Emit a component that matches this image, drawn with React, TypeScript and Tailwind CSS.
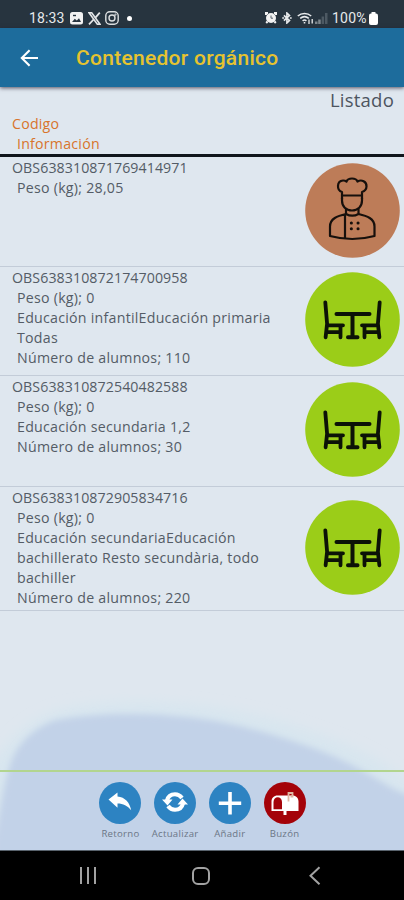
import React from 'react';

type Entry = {
  code: string;
  kind: 'kitchen' | 'dining';
  lines: string[];
  size: string;
};

const entries: Entry[] = [
  { code: 'OBS638310871769414971', kind: 'kitchen', lines: ['Peso (kg); 28,05'], size: 'h-[110px]' },
  {
    code: 'OBS638310872174700958',
    kind: 'dining',
    lines: ['Peso (kg); 0', 'Educación infantilEducación primaria', 'Todas', 'Número de alumnos; 110'],
    size: 'h-[109px]',
  },
  {
    code: 'OBS638310872540482588',
    kind: 'dining',
    lines: ['Peso (kg); 0', 'Educación secundaria 1,2', 'Número de alumnos; 30'],
    size: 'h-[111px]',
  },
  {
    code: 'OBS638310872905834716',
    kind: 'dining',
    lines: [
      'Peso (kg); 0',
      'Educación secundariaEducación',
      'bachillerato Resto secundària, todo',
      'bachiller',
      'Número de alumnos; 220',
    ],
    size: 'h-[124px]',
  },
];

export default function App() {
  return (
    <div className="flex h-[900px] w-[404px] flex-col overflow-hidden bg-[#dfe7ef] font-['Open_Sans',sans-serif]">
      <StatusBar />
      <AppBar />
      <main className="relative isolate flex flex-1 flex-col overflow-hidden">
        <Backdrop />
        <ListHeader />
        {entries.map(e => (
          <EntryRow key={e.code} entry={e} />
        ))}
        <Toolbar />
      </main>
      <NavBar />
    </div>
  );
}

function StatusBar() {
  return (
    <div className="flex h-7 shrink-0 items-center bg-[#27343f] pt-2 pl-[29px] font-[Roboto,sans-serif] text-[14px] text-[#e6e9eb]">
      <span className="w-[36px] tracking-[0.1px]">18:33</span>
      <svg className="ml-[5px]" width="13" height="13" viewBox="0 0 13 13">
        <rect width="13" height="12.5" rx="2.5" fill="#f2f2f2" />
        <path d="M2 10 L4.8 6.8 L6.8 8.6 L9 6.2 L11 10 Z" fill="#27343f" />
        <path d="M3 3.5h3" stroke="#27343f" strokeWidth="1.4" />
      </svg>
      <svg className="ml-[5px]" width="13" height="13" viewBox="0 0 13 13" fill="none" stroke="#e4e6e8">
        <path d="M1 .8h2.7l8.3 11.4H9.3z" strokeWidth="1.6" />
        <path d="M11.8.7 7.4 5.6M5.6 7.5 1 12.4" strokeWidth="1.8" />
      </svg>
      <svg className="ml-1" width="14" height="14" viewBox="0 0 14 14" fill="none" stroke="#dcdfe1" strokeWidth="1.4">
        <rect x=".8" y=".8" width="12.4" height="12.4" rx="4" />
        <circle cx="7" cy="7" r="3" />
        <circle cx="10.5" cy="3.6" r=".4" />
      </svg>
      <span className="ml-[8px] size-[5px] rounded-full bg-white" />
      <div className="ml-auto flex items-center pr-[26px]">
        <svg width="12" height="12" viewBox="0 0 12 12" fill="none" stroke="#f2f2f2">
          <path d="M1 3V1h2M9 1h2v2M2.5 9.5 1.2 11M9.5 9.5l1.3 1.5" strokeWidth="2" />
          <circle cx="6" cy="6" r="5" fill="#f2f2f2" stroke="none" />
          <path d="M6 3.5V6.2h2" stroke="#5a656e" />
        </svg>
        <svg className="ml-[5px]" width="10" height="12" viewBox="0 0 9 12" fill="none" stroke="#e8eaec" strokeWidth="1.6">
          <path d="M1.4 3.4 7 8.6 4.4 11V1L7 3.4 1.4 8.6" />
          <path d="M-.3 6h1.9M7.4 6h1.8" />
        </svg>
        <svg className="ml-[5px]" width="18" height="13" viewBox="0 0 18 13" fill="none" stroke="#e8eaec" strokeWidth="1.6">
          <path d="M.8 4C4.6.6 10.4.6 14.2 4M3.2 6.4c2.6-2.2 6-2.2 8.6 0M5.6 8.8c1.3-1 2.6-1 3.8 0" />
          <path d="M7.5 10v1.5" />
          <path d="M12 7.5V12M15.2 7v4.5" strokeWidth="1.3" />
        </svg>
        <svg width="13" height="12" viewBox="0 0 13 12">
          <path d="M0 12V9.5h2.5V12zM3.2 12V7.5h2.5V12z" fill="#7d868d" />
          <path d="M6.6 12V4.5h2.5V12zM10 12V1h2.5v11z" fill="#4d5963" />
        </svg>
        <span className="ml-[4px] w-[37px] tracking-[0.2px]">100%</span>
        <svg width="9" height="13" viewBox="0 0 9 13" fill="#fff">
          <rect x="2.5" width="4" height="3" rx=".6" />
          <rect y="1.4" width="9" height="11.6" rx="2" />
        </svg>
      </div>
    </div>
  );
}

function AppBar() {
  return (
    <header className="z-10 flex h-[59px] shrink-0 items-center bg-[#1d6c9c] shadow-[0_1px_4px_rgba(40,30,50,0.75)]">
      <svg className="ml-[20px]" width="19" height="18" viewBox="0 0 19 18" fill="none" stroke="#fff" strokeWidth="2.1">
        <path d="M18 9H2.5M9.6 1.2 1.8 9l7.8 7.8" />
      </svg>
      <h1 className="ml-[37px] pt-[2px] font-[Roboto,sans-serif] text-[21px] font-medium tracking-[0.28px] text-[#e6c32f]">
        Contenedor orgánico
      </h1>
    </header>
  );
}

function ListHeader() {
  return (
    <div className="flex h-[70px] shrink-0 flex-col border-b-[3px] border-[#10161c] text-[14.2px] leading-5 tracking-[0.22px] text-[#d8742c]">
      <div className="h-[27px] pr-[10px] text-right text-[18.5px] leading-[26px] text-[#4d555f]">Listado</div>
      <div className="pl-3">Codigo</div>
      <div className="pl-[17px]">Información</div>
    </div>
  );
}

function EntryRow({ entry }: { entry: Entry }) {
  return (
    <section className={`${entry.size} flex shrink-0 items-center border-b border-[#c3ccd8] text-[14.2px] leading-5 text-[#545c66]`}>
      <div className="flex-1 self-start pt-[1px]">
        <div className="pl-3 tracking-[0.08px]">{entry.code}</div>
        {entry.lines.map(l => (
          <div key={l} className="pl-[17px] tracking-[0.25px] whitespace-nowrap">{l}</div>
        ))}
      </div>
      <div className="mr-1 mb-[3px] flex size-[95px] items-center justify-center">
        {entry.kind === 'kitchen' ? <ChefIcon /> : <DiningIcon />}
      </div>
    </section>
  );
}

function ChefIcon() {
  return (
    <svg width="95" height="95" viewBox="0 0 95 95" fill="none" stroke="#17100c" strokeWidth="2.2" strokeLinejoin="round" strokeLinecap="round">
      <circle cx="47.5" cy="47.5" r="47.3" fill="#bd7c58" stroke="none" />
      <path d="M37 36V29c-5.5-1.6-5.5-11 1-11.5 1.6-.1 2.5.3 3.5 1 1.5-4 9.5-4 11 0 4-2.4 9.3 0 9 5-.1 3-1.6 4.6-4.5 5.500v7" />
      <path d="M37 32.5h20M37 35v2.500c0 6 4 10 10 10s10-4 10-10V35" />
      <path d="M41 46.5v4.500c4 2.200 8.500 2.200 12.500 0v-4.500M41 51c-8.500 2-16 4.500-16 12.500v9.500c14 3.800 30.500 3.800 44.500 0v-9.500c0-8-7.500-10.500-16-12.500M40 52v23" />
      <path d="M46.3 60h.1M53 60h.1M46.3 65.7h.1M53 65.7h.1" strokeWidth="3" />
    </svg>
  );
}

function DiningIcon() {
  return (
    <svg width="95" height="95" viewBox="0 0 95 95" fill="none" stroke="#0c1207" strokeWidth="4" strokeLinejoin="round" strokeLinecap="round">
      <circle cx="47.5" cy="47.5" r="47.3" fill="#9bcd18" stroke="none" />
      <path d="M31.5 42h33M47.5 43v22M43 65.2h9.500" />
      <path d="M20.3 30.3l1.8 21.5-1.5 13.500M22.500 53.300H38M35.500 54v11.300M22 60.200h13" strokeWidth="3.8" />
      <path d="M74.700 30.300l-1.800 21.500 1.500 13.500M72.500 53.300H57M59.500 54v11.300M73 60.200H60" strokeWidth="3.8" />
    </svg>
  );
}

function Backdrop() {
  return (
    <svg className="absolute inset-x-0 bottom-0 -z-10" width="404" height="160" viewBox="0 0 404 160">
      <defs>
        <filter id="halo" x="-20%" y="-20%" width="140%" height="140%">
          <feGaussianBlur stdDeviation="6" />
        </filter>
        <filter id="soft" x="-20%" y="-20%" width="140%" height="140%">
          <feGaussianBlur stdDeviation="3" />
        </filter>
      </defs>
      <path
        d="M-20 190V90C4 52 30 25 70 17c75-12 165-3 238 23 45 15 75 30 95 48l40 30v72z"
        fill="#d8e6ef"
        filter="url(#halo)"
      />
      <path
        d="M-6 190V150C0 130 2 92 14 65 22 49 38 36 56 30c60-11 135-6 184 6 40 10 80 23 108 37 18 9 30 17 44 25 12 7 26 9 40 12v80z"
        fill="#c2d2e8"
        filter="url(#soft)"
      />
    </svg>
  );
}

const actions = [
  { label: 'Retorno', color: '#2d83c2', icon: <ReturnGlyph /> },
  { label: 'Actualizar', color: '#2d83c2', icon: <RefreshGlyph /> },
  { label: 'Añadir', color: '#2d83c2', icon: <PlusGlyph /> },
  { label: 'Buzón', color: '#a40309', icon: <MailboxGlyph /> },
];

function Toolbar() {
  return (
    <footer className="mt-auto flex h-[80px] shrink-0 justify-center border-t-2 border-[#b2d58f] pt-[10px] pl-[1px]">
      {actions.map(a => (
        <button key={a.label} className="flex w-[54.7px] flex-col items-center">
          <svg width="42" height="42" viewBox="0 0 42 42">
            <circle cx="21" cy="21" r="21" fill={a.color} />
            {a.icon}
          </svg>
          <span className="mt-[3px] text-[9.6px] leading-[14px] tracking-[0.3px] text-[#6b7686]">{a.label}</span>
        </button>
      ))}
    </footer>
  );
}

function ReturnGlyph() {
  return <path d="M9.5 17.5 18.5 10.5v4c7.500.5 12.500 6.500 13.700 13.800-3.700-4.500-8-6.800-13.700-6.800v4.200z" fill="#fff" />;
}

function RefreshGlyph() {
  return (
    <g>
      <path d="M13 18.500c1-4.200 4.200-6.300 8-6.300 3.200 0 5.300 1.400 7 3.800M29 21.500c-1 4.200-4.200 6.300-8 6.300-3.200 0-5.300-1.400-7-3.800" fill="none" stroke="#fff" strokeWidth="4" />
      <path d="M8 17.500h10.500l-5 6zM34 22.500H23.500l5-6z" fill="#fff" />
    </g>
  );
}

function PlusGlyph() {
  return <path d="M21 10v22.500M9.800 21.200h22.400" stroke="#fff" strokeWidth="3.6" />;
}

function MailboxGlyph() {
  return (
    <g>
      <path d="M13.5 13.5h15c3.500 0 6 2.500 6 6V29H22.500v4h-3v-4H7.500v-9.500c0-3.500 2.500-6 6-6z" fill="#fff" />
      <path d="M9.500 27.300v-7.300c0-6.500 8.500-6.500 8.500 0v7.300z" fill="#a40309" />
      <path d="M24.500 19.500v-8.500h4v3.500h-2" fill="none" stroke="#dfb9a5" strokeWidth="1.8" />
    </g>
  );
}

function NavBar() {
  return (
    <nav className="flex h-[50px] shrink-0 items-center border-t border-[#59636d] bg-black">
      <svg width="404" height="49" viewBox="0 0 404 49" fill="none" stroke="#a2a2a2" strokeWidth="2">
        <path d="M81 16v17M88 16v17M95 16v17" />
        <rect x="193" y="17" width="16" height="16" rx="5" />
        <path d="m319.500 16.300-9 8.400 9 8.600" />
      </svg>
    </nav>
  );
}
